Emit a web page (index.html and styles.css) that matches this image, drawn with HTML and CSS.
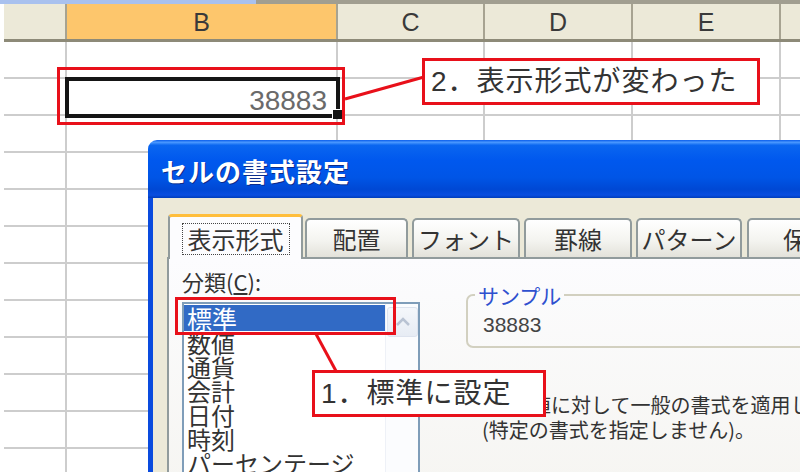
FILE: index.html
```html
<!DOCTYPE html>
<html lang="ja">
<head>
<meta charset="utf-8">
<title>セルの書式設定</title>
<link rel="stylesheet" href="styles.css">
</head>
<body>
<div class="stage">
  <div class="topbar"><div class="topbar-blue"></div></div>
  <div class="sheet">
    <div class="hrow">
      <div class="hc ca"></div>
      <div class="hc cb hsel">B</div>
      <div class="hc cc">C</div>
      <div class="hc cd">D</div>
      <div class="hc ce">E</div>
      <div class="hc cf"></div>
    </div>
    <div class="row"><div class="cell ca"></div><div class="cell cb"></div><div class="cell cc"></div><div class="cell cd"></div><div class="cell ce"></div><div class="cell cf"></div></div>
    <div class="row"><div class="cell ca"></div><div class="cell cb active">38883</div><div class="cell cc"></div><div class="cell cd"></div><div class="cell ce"></div><div class="cell cf"></div></div>
    <div class="row"><div class="cell ca"></div><div class="cell cb"></div><div class="cell cc"></div><div class="cell cd"></div><div class="cell ce"></div><div class="cell cf"></div></div>
    <div class="row"><div class="cell ca"></div><div class="cell cb"></div><div class="cell cc"></div><div class="cell cd"></div><div class="cell ce"></div><div class="cell cf"></div></div>
    <div class="row"><div class="cell ca"></div><div class="cell cb"></div><div class="cell cc"></div><div class="cell cd"></div><div class="cell ce"></div><div class="cell cf"></div></div>
    <div class="row"><div class="cell ca"></div><div class="cell cb"></div><div class="cell cc"></div><div class="cell cd"></div><div class="cell ce"></div><div class="cell cf"></div></div>
    <div class="row"><div class="cell ca"></div><div class="cell cb"></div><div class="cell cc"></div><div class="cell cd"></div><div class="cell ce"></div><div class="cell cf"></div></div>
    <div class="row"><div class="cell ca"></div><div class="cell cb"></div><div class="cell cc"></div><div class="cell cd"></div><div class="cell ce"></div><div class="cell cf"></div></div>
    <div class="row"><div class="cell ca"></div><div class="cell cb"></div><div class="cell cc"></div><div class="cell cd"></div><div class="cell ce"></div><div class="cell cf"></div></div>
    <div class="row"><div class="cell ca"></div><div class="cell cb"></div><div class="cell cc"></div><div class="cell cd"></div><div class="cell ce"></div><div class="cell cf"></div></div>
    <div class="row"><div class="cell ca"></div><div class="cell cb"></div><div class="cell cc"></div><div class="cell cd"></div><div class="cell ce"></div><div class="cell cf"></div></div>
    <div class="row"><div class="cell ca"></div><div class="cell cb"></div><div class="cell cc"></div><div class="cell cd"></div><div class="cell ce"></div><div class="cell cf"></div></div>
  </div>

  <div class="dialog">
    <div class="titlebar">セルの書式設定</div>
    <div class="dbody">
      <div class="tabs">
        <div class="tab active"><span class="focus">表示形式</span></div>
        <div class="tab t2">配置</div>
        <div class="tab t3">フォント</div>
        <div class="tab t4">罫線</div>
        <div class="tab t5">パターン</div>
        <div class="tab t6">保護</div>
      </div>
      <div class="panel">
        <div class="leftcol">
          <div class="label">分類(<span class="ul">C</span>):</div>
          <div class="listbox">
            <div class="items">
              <div class="item sel">標準</div>
              <div class="item">数値</div>
              <div class="item">通貨</div>
              <div class="item">会計</div>
              <div class="item">日付</div>
              <div class="item">時刻</div>
              <div class="item">パーセンテージ</div>
              <div class="item">分数</div>
            </div>
            <div class="scroll">
              <div class="up">
                <svg width="16" height="10" viewBox="0 0 16 10"><path d="M2 8 L8 2 L14 8" fill="none" stroke="#B9C3D3" stroke-width="2.5"/></svg>
              </div>
            </div>
          </div>
        </div>
        <div class="rightcol">
          <fieldset class="sample">
            <legend>サンプル</legend>
            <div class="sval">38883</div>
          </fieldset>
          <p class="desc"><span class="l1">値に対して一般の書式を適用します</span><br>(特定の書式を指定しません)。</p>
        </div>
      </div>
    </div>
  </div>

  <div class="rbox rb1"></div>
  <div class="rbox rb2"></div>
  <div class="callout c2">2．表示形式が変わった</div>
  <div class="callout c1">1．標準に設定</div>
  <svg class="lines" width="800" height="472" viewBox="0 0 800 472">
    <line x1="345" y1="99" x2="424" y2="77"/>
    <line x1="316" y1="334" x2="336" y2="371"/>
  </svg>
</div>
</body>
</html>
```

FILE: styles.css
```css
* { box-sizing: border-box; }
html, body { margin: 0; padding: 0; }
body {
  width: 800px;
  height: 472px;
  overflow: hidden;
  background: #fff;
  font-family: "Noto Sans CJK JP", sans-serif;
  color: #333;
}
.stage { position: relative; width: 800px; height: 472px; overflow: hidden; }

/* sheet */
.topbar { height: 4px; background: #A19E90; }
.topbar-blue { width: 256px; height: 4px; background: #A9C1EE; }
.sheet { margin-left: 4px; }
.hrow { display: flex; height: 38px; background: #ECE9D8; border-bottom: 3px solid #8D8A78; }
.hc {
  flex: none;
  border-right: 2px solid #A7A391;
  font-family: "Liberation Sans", sans-serif;
  font-size: 25px;
  color: #3a3a3a;
  text-align: center;
  line-height: 37px;
}
.hsel { background: #FDC66C; }
.ca { width: 63px; }
.cb { width: 271px; }
.cc { width: 147px; }
.cd { width: 148px; }
.ce { width: 148px; }
.cf { flex: 1; border-right: none; }
.row { display: flex; height: 37px; }
.cell { flex: none; border-right: 2px solid #CDCDCD; border-bottom: 2px solid #CDCDCD; }
.cell.cf { flex: 1; border-right: none; }
.cell.active {
  position: relative;
  outline: 4px solid #151515;
  outline-offset: -2px;
  text-align: right;
  padding: 4px 9px 0 0;
  font-family: "Liberation Sans", sans-serif;
  font-size: 28px;
  line-height: 35px;
  color: #6a6a6a;
}
.cell.active::after {
  content: "";
  position: absolute;
  right: -6px;
  bottom: -5px;
  width: 9px;
  height: 9px;
  background: #151515;
  border-left: 1px solid #fff;
  border-top: 1px solid #fff;
}

/* dialog */
.dialog { position: absolute; left: 148px; top: 140px; width: 700px; height: 360px; }
.titlebar {
  height: 58px;
  border-radius: 9px 9px 0 0;
  background: linear-gradient(180deg, #0A5DEB 0%, #4A98FF 4%, #0A66F0 9%, #0058EE 35%, #0055E6 65%, #0048D4 85%, #0A4EE0 95%, #003DBA 100%);
  color: #fff;
  font-weight: bold;
  font-size: 26px;
  letter-spacing: 1px;
  line-height: 62px;
  padding-left: 13px;
  white-space: nowrap;
  text-shadow: 1px 1px 0 #0B2C8C;
  overflow: hidden;
}
.dbody {
  background: #ECE9D8;
  border-left: 5px solid #0A4BDE;
  height: 302px;
  padding: 16px 0 0 14px;
}
.tabs { display: flex; align-items: flex-end; height: 43px; position: relative; z-index: 1; }
.tab {
  flex: none;
  height: 39px;
  margin-left: 4px;
  border: 2px solid #919B9C;
  border-bottom: none;
  border-radius: 5px 5px 0 0;
  background: linear-gradient(#FFFFFF, #F4F4F0 55%, #E3E2DA);
  font-size: 24px;
  line-height: 37px;
  text-align: center;
  color: #333;
  white-space: nowrap;
}
.tab.active {
  width: 135px;
  height: 45px;
  margin-left: 1px;
  margin-bottom: -2px;
  border-top: 3px solid #FFBE3C;
  border-radius: 4px 4px 0 0;
  background: #FCFCFE;
  padding-top: 4px;
  line-height: normal;
}
.focus {
  display: inline-block;
  border: 1px dotted #444;
  height: 32px;
  line-height: 30px;
  padding: 0 5px;
}
.t2 { width: 103px; margin-left: 2px; }
.t3 { width: 108px; }
.t4 { width: 108px; }
.t5 { width: 106px; }
.t6 { width: 120px; margin-left: 5px; }

.panel {
  display: flex;
  height: 300px;
  border: 2px solid #919B9C;
  border-right: none;
  background: linear-gradient(#FCFCFE, #F4F3EE);
  padding: 10px 0 0 13px;
}
.leftcol { flex: none; width: 238px; }
.label { font-size: 22px; line-height: 25px; height: 25px; white-space: nowrap; }
.ul { text-decoration: underline; }
.listbox {
  margin-top: 8px;
  display: flex;
  width: 238px;
  height: 200px;
  border: 2px solid #7F9DB9;
  background: #fff;
}
.items { flex: none; width: 201px; padding-top: 1px; overflow: hidden; }
.item {
  height: 24px;
  font-size: 24px;
  line-height: 24px;
  padding-left: 3px;
  color: #333;
  white-space: nowrap;
}
.item.sel { background: #316AC5; color: #fff; height: 26px; line-height: 26px; font-size: 25px; }
.scroll { flex: 1; position: relative; border-left: 1px solid #EEF1F7; background: #FBFCFE; }
.up {
  position: absolute;
  top: 3px;
  left: 1px;
  width: 31px;
  height: 30px;
  border: 1px solid #DDE3EE;
  border-radius: 3px;
  background: linear-gradient(#F5F7FB, #E7ECF4);
  display: flex;
  align-items: center;
  justify-content: center;
}

.rightcol { flex: none; width: 420px; margin-left: 46px; padding-top: 13px; }
.sample {
  margin: 0;
  width: 420px;
  border: 2px solid #D2D0C0;
  border-radius: 7px;
  padding: 0 15px;
}
.sample legend {
  margin-left: -8px;
  padding: 0 3px;
  font-size: 21px;
  line-height: 26px;
  color: #2E50CF;
}
.sval {
  font-family: "Liberation Sans", sans-serif;
  font-size: 21px;
  line-height: 24px;
  margin: 5px 0 9px;
  color: #444;
}
.desc { margin: 44px 0 0 16px; font-size: 20px; line-height: 25px; color: #333; white-space: nowrap; }
.l1 { display: inline-block; padding-left: 49px; }

/* annotations */
.rbox { position: absolute; border: 3px solid #E8101A; }
.rb1 { left: 57px; top: 67px; width: 288px; height: 58px; }
.rb2 { left: 175px; top: 297px; width: 221px; height: 38px; }
.callout {
  position: absolute;
  border: 3px solid #E8101A;
  background: #fff;
  font-family: "Liberation Sans", "Noto Sans CJK JP", sans-serif;
  font-size: 28px;
  letter-spacing: 1px;
  line-height: 41px;
  padding-left: 6px;
  white-space: nowrap;
  color: #333;
}
.c2 { left: 422px; top: 58px; width: 338px; height: 47px; }
.c1 { left: 312px; top: 370px; width: 234px; height: 47px; }
.lines { position: absolute; left: 0; top: 0; pointer-events: none; }
.lines line { stroke: #E8101A; stroke-width: 3; }
```
